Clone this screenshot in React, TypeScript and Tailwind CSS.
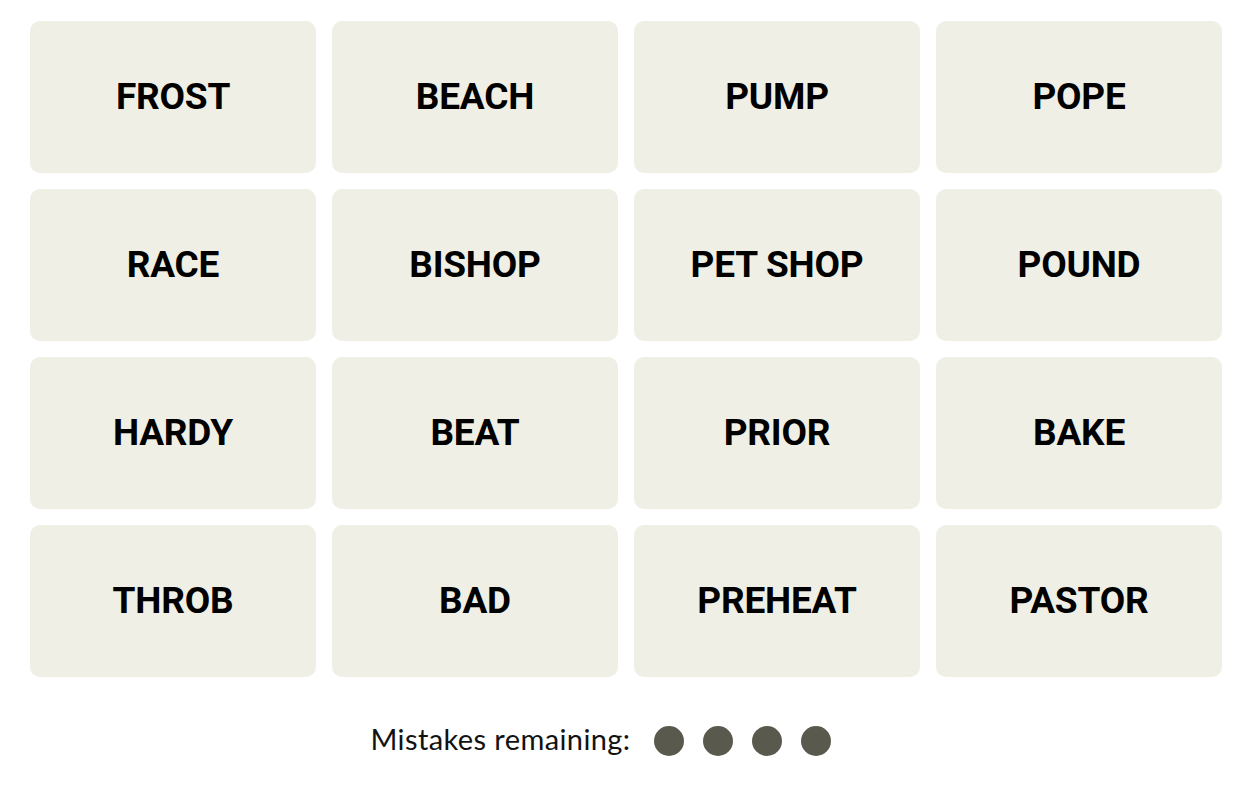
const words = [
  "FROST", "BEACH", "PUMP", "POPE",
  "RACE", "BISHOP", "PET SHOP", "POUND",
  "HARDY", "BEAT", "PRIOR", "BAKE",
  "THROB", "BAD", "PREHEAT", "PASTOR",
];

const App = () => {
  return (
    <main className="w-[1250px] h-[789px] bg-white pt-[21px] pl-[30px] pr-[28px]">
      <div className="grid grid-cols-4 gap-4">
        {words.map((w) => (
          <button
            key={w}
            className="h-[152px] rounded-[10px] bg-[#efefe6] flex items-center justify-center text-[37px] font-bold text-black font-['Roboto',sans-serif] tracking-[-0.2px]"
          >
            {w}
          </button>
        ))}
      </div>

      <div className="flex items-center justify-center pr-[49px] mt-[47px] -ml-[30px] -mr-[28px]">
        <span className="text-[29px] leading-none mb-[4px] text-[#121212] font-['Lato',sans-serif] tracking-[0.4px]">Mistakes remaining:</span>
        <div className="flex gap-[19px] ml-[23px]">
          {[0, 1, 2, 3].map((i) => (
            <span key={i} className="size-[30px] rounded-full bg-[#5a594e]" />
          ))}
        </div>
      </div>
    </main>
  );
};

export default App;
